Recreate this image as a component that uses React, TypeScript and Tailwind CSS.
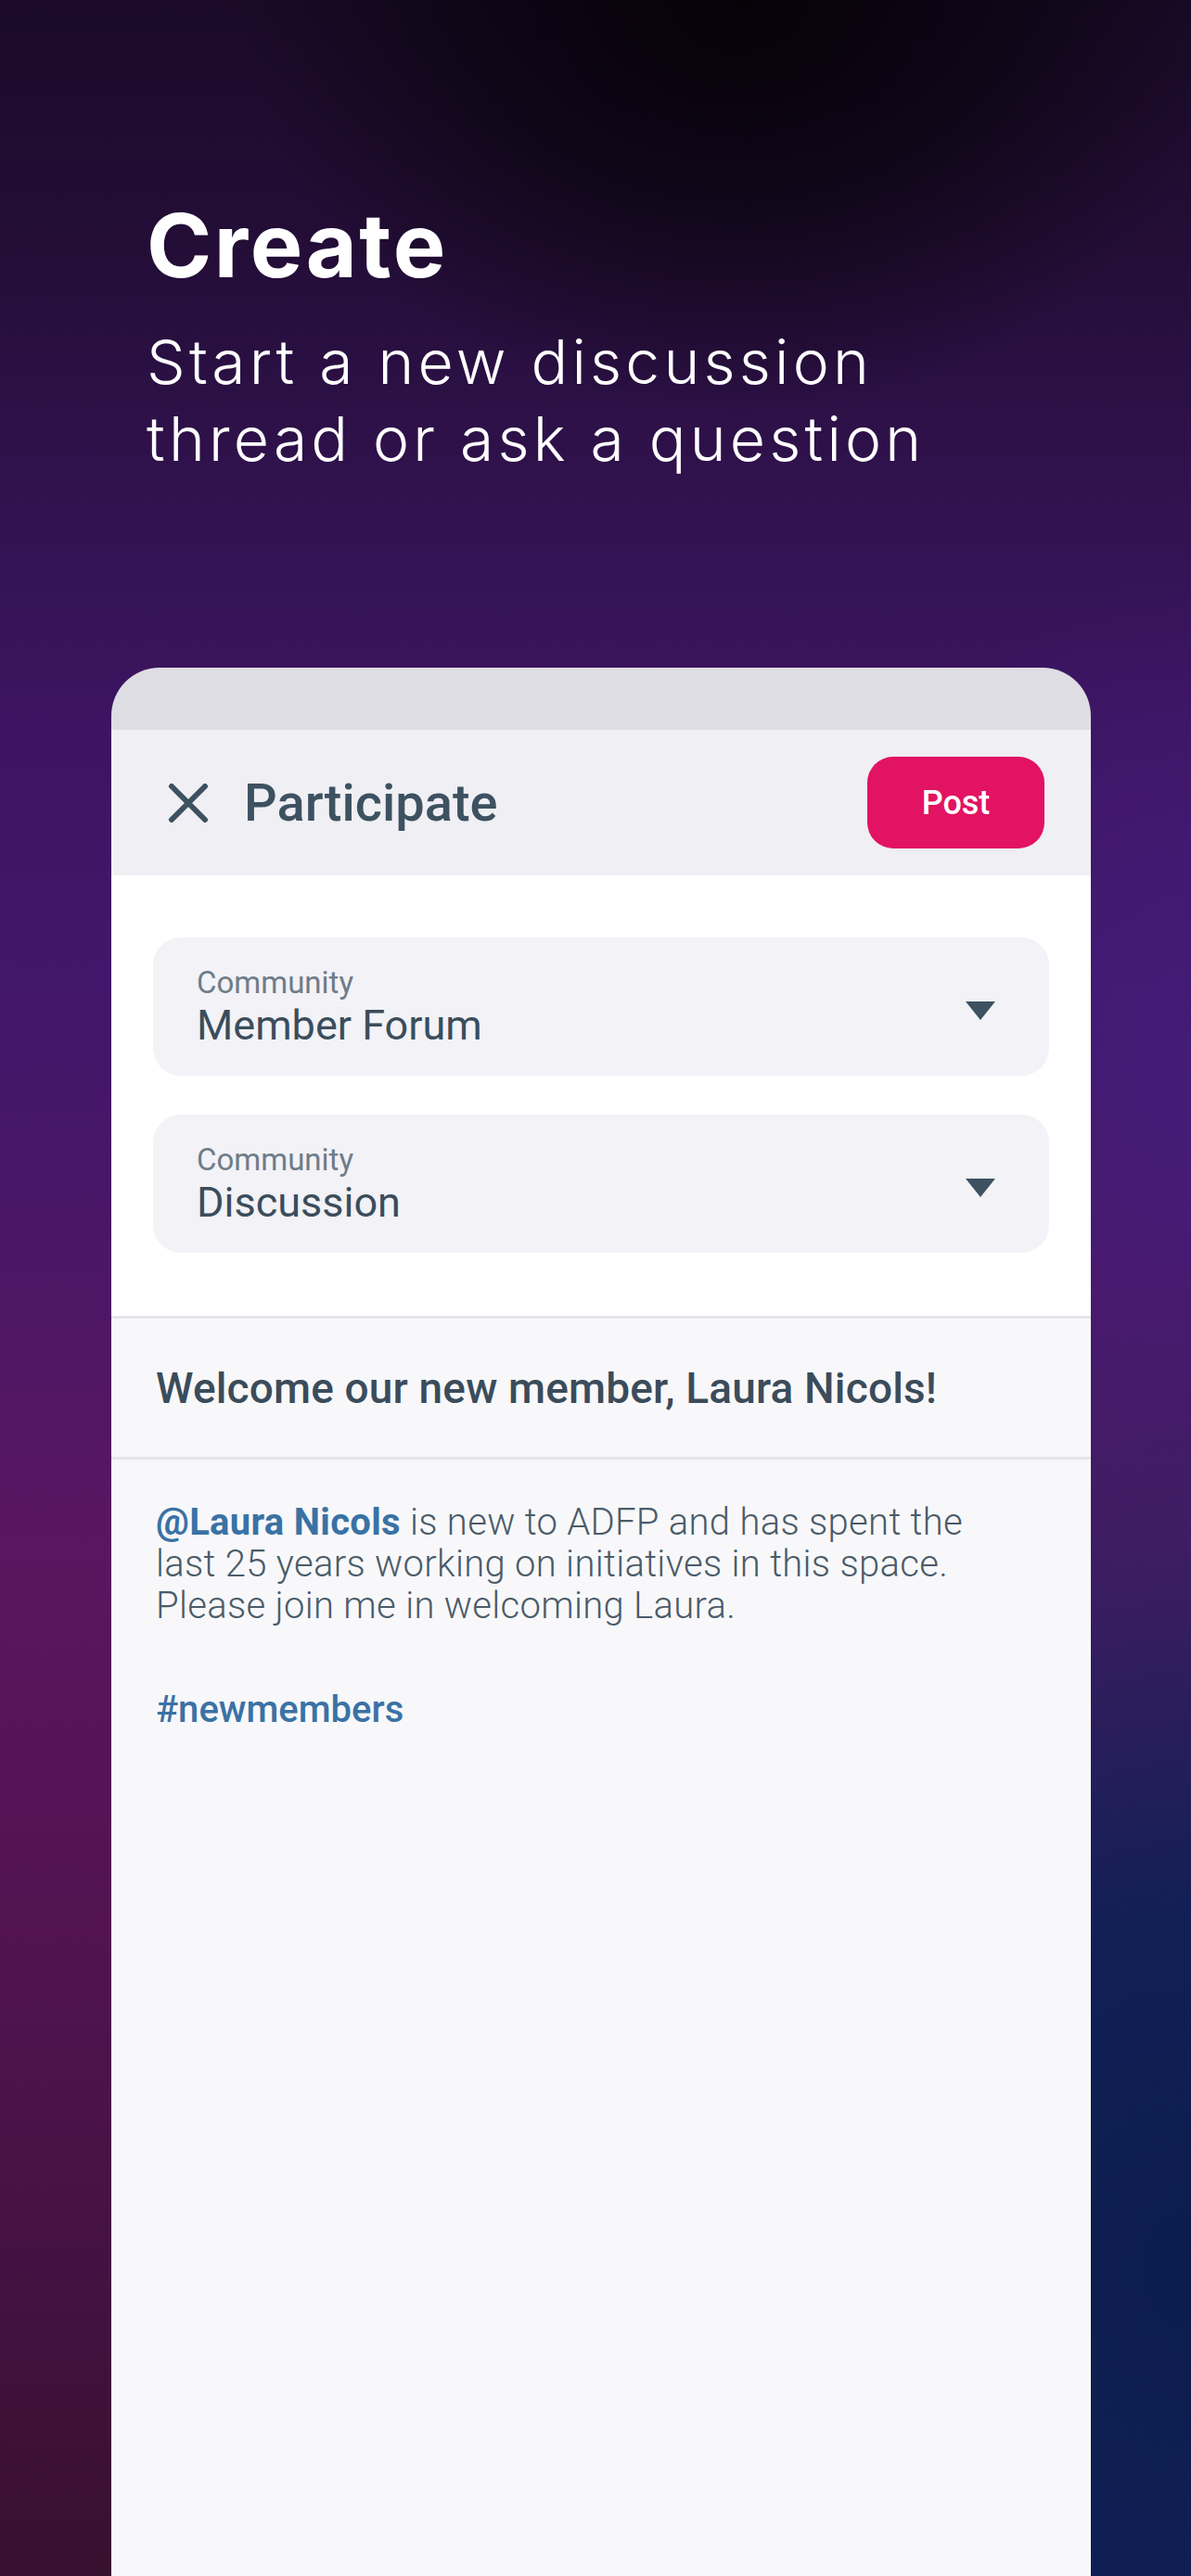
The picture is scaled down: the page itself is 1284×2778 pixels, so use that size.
import React from "react";

function Dropdown({ value }: { value: string }) {
  return (
    <div className="flex h-[149px] items-start justify-between rounded-[30px] bg-[#f2f2f7] pl-[47px] pr-[58px] pt-[29px]">
      <div className="flex flex-col">
        <span className="text-[33px] leading-[40px] text-[#6f7c87]">Community</span>
        <span className="text-[45px] leading-[52px] text-[#3b4d5b]">{value}</span>
      </div>
      <svg width="32" height="20" viewBox="0 0 32 20" className="mt-[40px]">
        <path d="M0 0 H32 L16 20 Z" fill="#3d5160" />
      </svg>
    </div>
  );
}

export default function App() {
  return (
    <div
      className="relative h-[2778px] w-[1284px] overflow-hidden bg-[radial-gradient(ellipse_42%_16%_at_62%_0%,#060208_0%,rgba(6,2,8,0.6)_50%,transparent_100%),radial-gradient(ellipse_75%_45%_at_100%_88%,#0b1d4c_0%,rgba(14,32,86,0.95)_30%,rgba(30,36,100,0.5)_60%,transparent_85%),radial-gradient(ellipse_30%_20%_at_100%_42%,rgba(68,30,124,0.8)_0%,transparent_100%),linear-gradient(180deg,#1a0a28_0%,#240e38_10%,#321250_20%,#3d1461_28%,#42166a_38%,#4a1766_48%,#5a1660_60%,#521350_75%,#441242_88%,#38102f_100%)]"
      style={{ fontFamily: "Roboto, 'Noto Sans', sans-serif" }}
    >
      <div className="pl-[158px] pt-[217px]" style={{ fontFamily: "Inter, 'Noto Sans', sans-serif" }}>
        <h1 className="text-[95px] font-bold leading-[95px] tracking-[2.5px] text-white">Create</h1>
        <p className="mt-[37px] text-[66px] font-light leading-[83px] tracking-[4.2px] text-white">
          Start a new discussion
          <br />
          thread or ask a question
        </p>
      </div>

      <div className="ml-[120px] mt-[205px] w-[1056px] overflow-hidden rounded-t-[52px]">
        <div className="h-[67px] bg-[#dedde3]" />
        <div className="flex h-[157px] items-center justify-between bg-[#efeff4] pl-[61px] pr-[50px]">
          <div className="flex items-center">
            <svg width="44" height="42" viewBox="0 0 44 42">
              <path d="M4 3 L40 39 M40 3 L4 39" stroke="#3d5160" strokeWidth="6" strokeLinecap="round" />
            </svg>
            <span className="ml-[38px] text-[56px] font-medium leading-[64px] text-[#3d5160]">Participate</span>
          </div>
          <button className="flex h-[99px] w-[191px] items-center justify-center rounded-[28px] bg-[#e11362] text-[36px] font-medium text-white">
            Post
          </button>
        </div>
        <div className="flex flex-col gap-[42px] bg-white px-[45px] pb-[68px] pt-[67px]">
          <Dropdown value="Member Forum" />
          <Dropdown value="Discussion" />
        </div>
        <div className="h-[3px] bg-[#e3e5e9]" />
        <div className="flex h-[149px] items-center bg-[#f8f8fa] pl-[48px]">
          <h2 className="text-[46px] font-medium leading-[54px] tracking-[0.15px] text-[#3b4c5a]">Welcome our new member, Laura Nicols!</h2>
        </div>
        <div className="h-[3px] bg-[#e3e5e9]" />
        <div className="h-[1300px] bg-[#f8f8fa] pl-[48px] pt-[45px]">
          <p className="text-[40px] font-light leading-[45px] tracking-[0.3px] text-[#4b5b69]">
            <span className="font-bold text-[#3a72a5]">@Laura Nicols</span> is new to ADFP and has spent the
            <br />
            last 25 years working on initiatives in this space.
            <br />
            Please join me in welcoming Laura.
          </p>
          <p className="mt-[67px] text-[40px] font-medium leading-[45px] text-[#3a72a5]">#newmembers</p>
        </div>
      </div>
    </div>
  );
}
